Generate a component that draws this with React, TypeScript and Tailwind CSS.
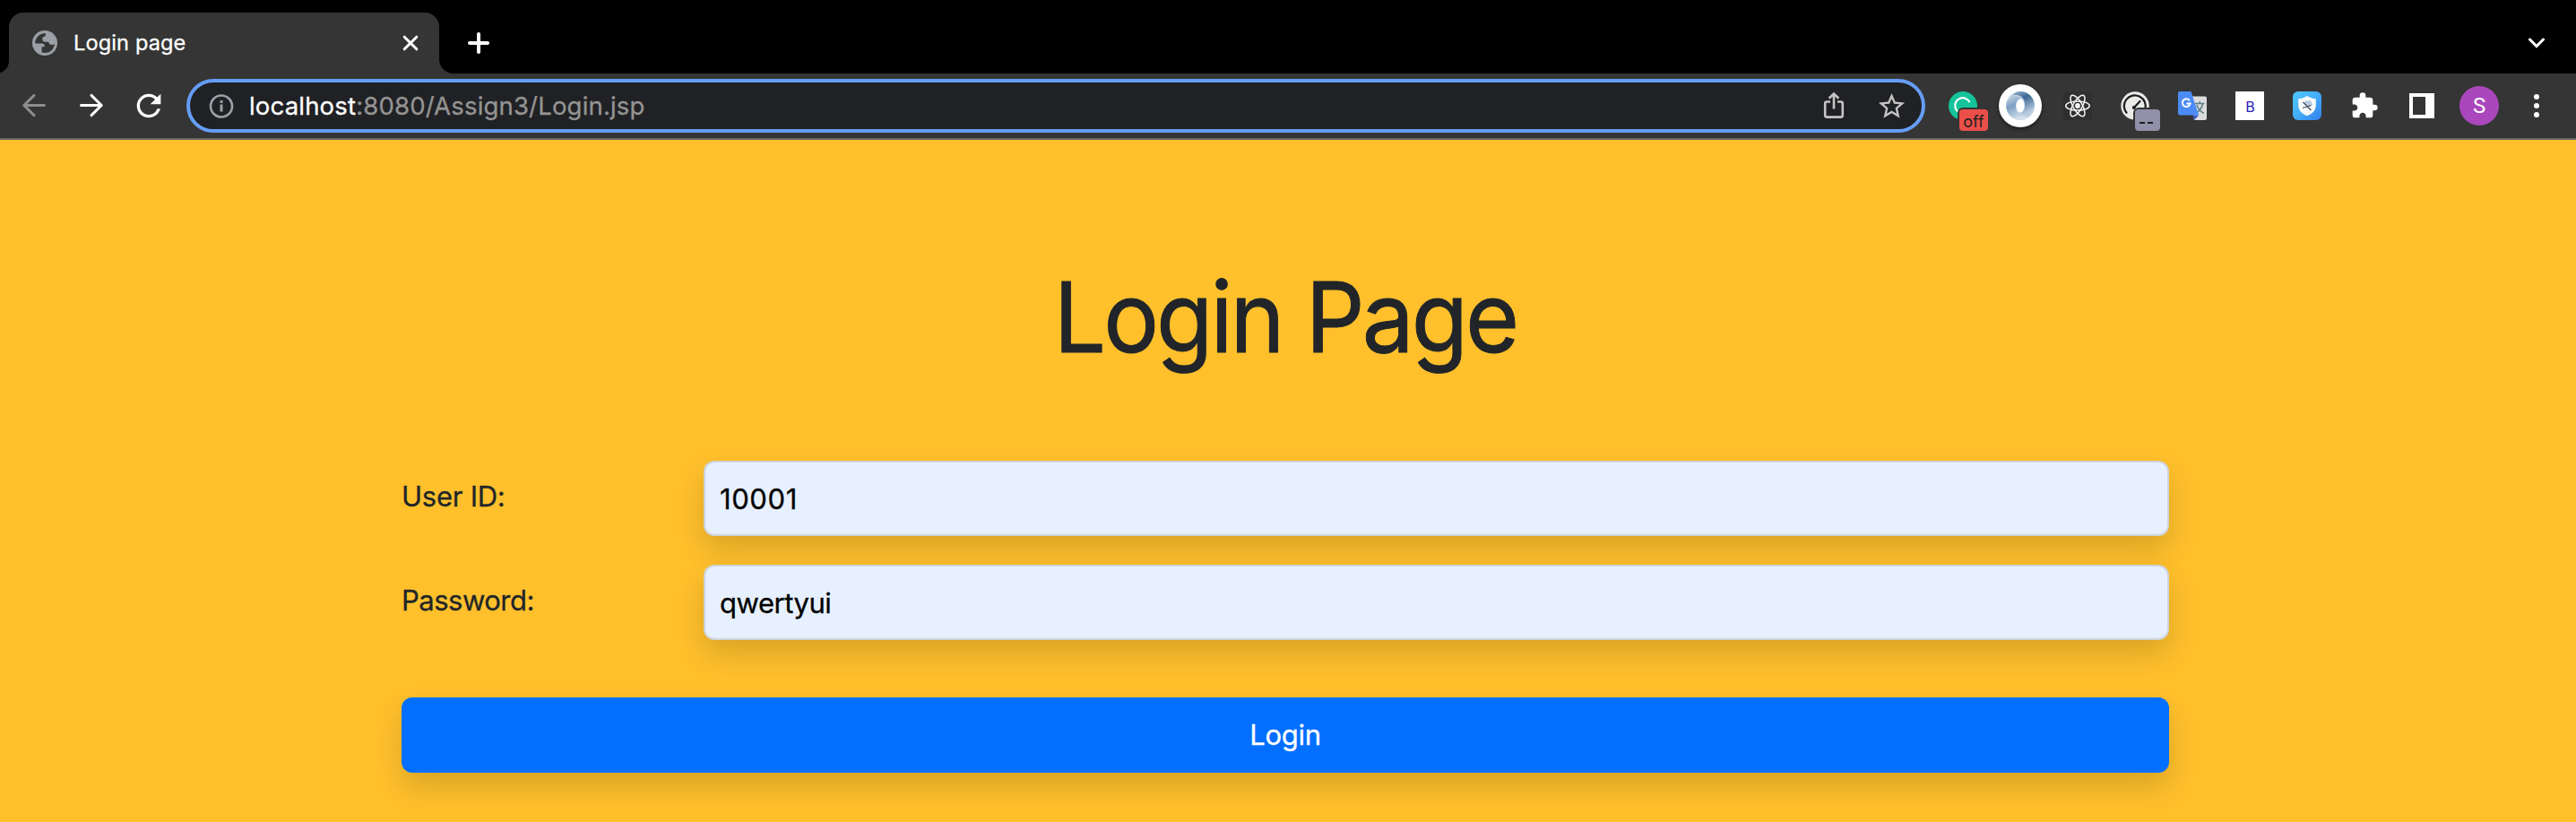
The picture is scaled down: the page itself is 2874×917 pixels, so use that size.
import type { ReactNode } from "react";
import { MdExtension, MdRefresh, MdStarOutline } from "react-icons/md";

const uiFont = "font-['Inter','Liberation_Sans',sans-serif]";

function Cell({ children }: { children: ReactNode }) {
  return <div className="relative flex h-full w-16 shrink-0 items-center justify-center">{children}</div>;
}

function TabStrip() {
  return (
    <div className="flex h-[82px] items-end bg-black">
      <svg width="10" height="14" viewBox="0 0 10 14" className="shrink-0">
        <path d="M10 0C10 7 5 12 0 13.2V14H10Z" fill="#353535" />
      </svg>
      <div className="flex h-[68px] w-[480px] shrink-0 items-center rounded-t-[16px] bg-[#353535] pl-[26px]">
        <svg width="28" height="28" viewBox="0 0 28 28" className="shrink-0">
          <circle cx="14" cy="14" r="14" fill="#9aa0a6" />
          <path
            d="M14.8 3C9 3 4.4 7 3.2 12.6L3.4 14.4H10.6C12.6 14.4 13.8 15.6 13.8 17.4V18.2H10.6V24.6C11.8 25 13 25 14.4 25 20.2 24.8 24.8 20.2 25 14.4 24 16 22 16.4 20 15.6 18.8 14.9 18.8 13.8 18 12.8H14.4C12.6 12.8 11.6 11.8 11.4 10V8.6C11.4 7.4 12.4 6.6 14.8 6.4Z"
            fill="#353535"
          />
        </svg>
        <span className="ml-[18px] w-[339px] text-[23.5px] leading-7 tracking-[0.15px] text-white [-webkit-text-stroke:0.3px]">
          Login page
        </span>
        <svg width="18" height="18" viewBox="0 0 18 18" className="ml-[28px] shrink-0" stroke="#fff" strokeWidth="3" strokeLinecap="round">
          <path d="M2.2 2.2 15.8 15.8M15.8 2.2 2.2 15.8" />
        </svg>
      </div>
      <svg width="16" height="16" viewBox="0 0 16 16" className="shrink-0">
        <path d="M0 0A16 16 0 0 0 16 16H0Z" fill="#353535" />
      </svg>
      <div className="flex h-[68px] flex-1 items-center justify-between pr-[34px] pl-[16px]">
        <svg width="24" height="24" viewBox="0 0 24 24" stroke="#fff" strokeWidth="4" strokeLinecap="round">
          <path d="M12 2V22M2 12H22" />
        </svg>
        <svg width="20" height="12" viewBox="0 0 20 12" fill="none" stroke="#fff" strokeWidth="3" strokeLinecap="round">
          <path d="M2.5 2 10 9.6 17.5 2" />
        </svg>
      </div>
    </div>
  );
}

function Omnibox() {
  return (
    <div className="mx-[10px] flex h-[60px] w-[1940px] shrink-0 items-center rounded-full border-4 border-[#659df5] bg-[#202124] pl-[21px]">
      <svg width="28" height="28" viewBox="0 0 28 28" fill="none" stroke="#9aa0a6">
        <circle cx="14" cy="14.5" r="12" strokeWidth="2.6" />
        <path d="M14 12.5V20.6" strokeWidth="3" />
        <path d="M14 8V11" strokeWidth="3" />
      </svg>
      <span className="ml-[17px] flex-1 text-[27.5px] leading-9 tracking-[0.18px] text-[#949494] [-webkit-text-stroke:0.3px]">
        <span className="text-white">localhost</span>:8080/Assign3/Login.jsp
      </span>
      <svg width="24" height="32" viewBox="0 0 24 32" fill="none" stroke="#c4c4c4" strokeWidth="2.6">
        <path d="M8 11.5H4.2Q2.2 11.5 2.2 13.5V26.5Q2.2 28.6 4.2 28.6H19.8Q21.8 28.6 21.8 26.5V13.5Q21.8 11.5 19.8 11.5H16" />
        <path d="M12 19.5V3.2M6.6 7.8 12 2.6 17.4 7.8" />
      </svg>
      <MdStarOutline className="mr-[16.5px] ml-[34.5px] size-[35px] text-[#c4c4c4]" />
    </div>
  );
}

function Extensions() {
  return (
    <>
      <Cell>
        <svg width="32" height="32" viewBox="0 0 32 32" fill="none">
          <circle cx="16" cy="16" r="16" fill="#15c39a" />
          <path d="M23.2 11.4A8.6 8.6 0 1 0 16 24.4" stroke="#fff" strokeWidth="2.2" strokeLinecap="round" />
        </svg>
        <span className="absolute top-[40px] left-[28px] flex h-6 w-8 items-center justify-center rounded-[4px] bg-[#e94f48] pt-[3px] text-[18px] leading-none text-[#202020] ring-2 ring-[#353535]">
          off
        </span>
      </Cell>
      <Cell>
        <div className="flex size-12 items-center justify-center rounded-full bg-white shadow-[0_2px_4px_rgba(0,0,0,0.5)]">
          <svg width="32" height="32" viewBox="0 0 32 32">
            <defs>
              <linearGradient id="ringLeft" x1="0" y1="0" x2="0.4" y2="1">
                <stop offset="0" stopColor="#c6d6e6" />
                <stop offset="0.45" stopColor="#7c9fc2" />
                <stop offset="1" stopColor="#d3e0ec" />
              </linearGradient>
              <linearGradient id="ringRight" x1="0" y1="0" x2="0.4" y2="1">
                <stop offset="0" stopColor="#9db7d2" />
                <stop offset="0.4" stopColor="#3c6694" />
                <stop offset="1" stopColor="#b4c9dd" />
              </linearGradient>
            </defs>
            <circle cx="16" cy="16" r="16" fill="#bdd0e2" />
            <path d="M16 8C10 2 1 8 0.2 15 0 24 7 32 16 32 20 32 23 30 24 28 16 29 11 25 11 17 11 12 13 9.500 16 8Z" fill="url(#ringLeft)" />
            <path d="M16 24C22 29 31 24 31.800 16 32 7 25 0 16 0 12 0 9 2 8 4 16 3 21 7 21 15 21 20 19 22.500 16 24Z" fill="url(#ringRight)" />
            <ellipse cx="16" cy="16" rx="4.600" ry="7.400" fill="#fff" />
          </svg>
        </div>
      </Cell>
      <Cell>
        <svg width="32" height="32" viewBox="0 0 32 32" fill="none" stroke="#f4f4f4" strokeWidth="1.5">
          <rect width="32" height="32" rx="3" fill="#2f2f2f" stroke="none" />
          <circle cx="16" cy="16" r="2.900" fill="#f4f4f4" stroke="none" />
          <ellipse cx="16" cy="16" rx="13.300" ry="5.100" />
          <ellipse cx="16" cy="16" rx="13.300" ry="5.100" transform="rotate(60 16 16)" />
          <ellipse cx="16" cy="16" rx="13.300" ry="5.100" transform="rotate(120 16 16)" />
        </svg>
      </Cell>
      <Cell>
        <svg width="32" height="32" viewBox="0 0 32 32" fill="none">
          <circle cx="16" cy="16" r="15.700" fill="#e9ebe8" />
          <path d="M7 24.500A12 12 0 1 1 27.200 20" stroke="#1c1c1c" strokeWidth="2.200" />
          <path d="M15 18 21.500 11" stroke="#1c1c1c" strokeWidth="2.200" strokeLinecap="round" />
          <circle cx="14.800" cy="18" r="2" fill="#1c1c1c" />
        </svg>
        <span className="absolute top-[40px] left-[32px] flex h-6 w-7 items-center justify-center gap-[3px] rounded-[4px] bg-[#9090a8] pt-[5px] pr-[3px] ring-2 ring-[#353535]">
          <span className="h-[2px] w-[6px] bg-[#1e1e1e]" />
          <span className="h-[2px] w-[6px] bg-[#1e1e1e]" />
        </span>
      </Cell>
      <Cell>
        <svg width="32" height="32" viewBox="0 0 32 32">
          <path d="M13 5.500H30Q32 5.500 32 7.500V30Q32 32 30 32H18Z" fill="#dcdcdc" />
          <path d="M19 13.500H29.500M24.200 11V13.500M27.500 14C26.500 18.500 23 22.500 19.500 24.500M20.800 15C22.500 19.500 25 22.500 28.800 24.500" stroke="#5d7f8a" strokeWidth="1.600" fill="none" />
          <path d="M16.500 26.500H23.200L18 32Z" fill="#3457c8" />
          <path d="M2 0H14.500L23.200 26.500H2Q0 26.500 0 24.500V2Q0 0 2 0Z" fill="#4c8bf5" />
          <path d="M12.900 10.100A4.400 4.400 0 1 0 13.600 13.600H9.400" stroke="#fff" strokeWidth="2" fill="none" />
        </svg>
      </Cell>
      <Cell>
        <div className="flex size-8 items-center justify-center bg-white pt-px pl-px text-[16px] leading-none text-[#2a22b5]">B</div>
      </Cell>
      <Cell>
        <svg width="32" height="32" viewBox="0 0 32 32">
          <defs>
            <linearGradient id="shieldTile" x1="0" y1="0" x2="1" y2="1">
              <stop offset="0" stopColor="#4fcbff" />
              <stop offset="0.500" stopColor="#44acf8" />
              <stop offset="1" stopColor="#3280ec" />
            </linearGradient>
          </defs>
          <rect width="32" height="32" rx="6" fill="url(#shieldTile)" />
          <path d="M16 5C19 7 22.500 8 25.800 8.200V15C25.800 21 22 25 16 27.200 10 25 6.200 21 6.200 15V8.200C9.500 8 13 7 16 5Z" fill="#f7f9fb" />
          <path d="M13 14C12 11.500 15 9.500 17 10.500 19.500 9.500 21.500 11.500 21 13 22.500 14 21.500 16 20 16H17Z" fill="#b8cbe2" />
          <path d="M11.500 12 20.500 21M11 18.500 14.500 17.500 20.500 15.500" stroke="#3f4d5c" strokeWidth="1.300" fill="none" />
        </svg>
      </Cell>
      <Cell>
        <MdExtension className="size-8 text-white" />
      </Cell>
      <Cell>
        <div className="h-7 w-7 border-4 border-r-[10px] border-white" />
      </Cell>
      <Cell>
        <div className="flex size-11 items-center justify-center rounded-full bg-[#ab47bc] font-['Roboto','Inter',sans-serif] text-[24px] leading-none text-white">
          S
        </div>
      </Cell>
      <Cell>
        <div className="flex flex-col gap-1">
          <span className="size-[6px] rounded-full bg-white" />
          <span className="size-[6px] rounded-full bg-white" />
          <span className="size-[6px] rounded-full bg-white" />
        </div>
      </Cell>
    </>
  );
}

function Toolbar() {
  return (
    <div className="flex h-[74px] items-center border-b-2 border-[#656565] bg-[#353535] pl-[6px]">
      <Cell>
        <svg width="28" height="28" viewBox="0 0 28 28" fill="none" stroke="#8d8d8d" strokeWidth="3" strokeLinecap="round" strokeLinejoin="round">
          <path d="M25.500 13.500H2.800M14 2.400 2.800 13.500 14 24.600" />
        </svg>
      </Cell>
      <Cell>
        <svg width="28" height="28" viewBox="0 0 28 28" fill="none" stroke="#fff" strokeWidth="3" strokeLinecap="round" strokeLinejoin="round">
          <path d="M2.500 13.500H25.200M14 2.400 25.200 13.500 14 24.600" />
        </svg>
      </Cell>
      <Cell>
        <MdRefresh className="size-10 text-white" />
      </Cell>
      <Omnibox />
      <Extensions />
    </div>
  );
}

interface FieldProps {
  id: string;
  label: string;
  value: string;
  labelTracking: string;
  valueTracking: string;
}

function Field({ id, label, value, labelTracking, valueTracking }: FieldProps) {
  return (
    <div className="flex">
      <label
        htmlFor={id}
        className={`flex h-[78px] w-[337px] items-center text-[31px] leading-none text-[#212529] [-webkit-text-stroke:0.3px] ${labelTracking}`}
      >
        {label}
      </label>
      <input
        id={id}
        defaultValue={value}
        className={`h-[84px] flex-1 rounded-[12px] border-2 border-[#ced4da] bg-[#e7f0fe] px-4 text-[31px] text-black shadow-[0_16px_32px_rgba(0,0,0,0.15)] outline-none [-webkit-text-stroke:0.3px] ${valueTracking}`}
      />
    </div>
  );
}

export default function App() {
  return (
    <div className={`flex h-[917px] w-[2874px] flex-col overflow-hidden bg-[#ffc02c] ${uiFont}`}>
      <TabStrip />
      <Toolbar />
      <main className="pr-[454px] pl-[448px]">
        <h1 className="scale-x-[0.945] pt-[142px] text-center text-[109px] leading-[110px] tracking-[-3px] text-[#212529] [-webkit-text-stroke:1px]">
          Login Page
        </h1>
        <form className="mt-[106px] flex flex-col" onSubmit={(e) => e.preventDefault()}>
          <div className="flex flex-col gap-8">
            <Field id="user" label="User ID:" value="10001" labelTracking="tracking-[-0.25px]" valueTracking="tracking-[0.6px]" />
            <Field id="password" label="Password:" value="qwertyui" labelTracking="tracking-[-0.5px]" valueTracking="tracking-[-0.45px]" />
          </div>
          <button className="mt-16 h-[84px] rounded-[12px] bg-[#026fff] text-[31px] tracking-[-0.3px] text-white shadow-[0_16px_32px_rgba(0,0,0,0.15)] [-webkit-text-stroke:0.3px]">
            Login
          </button>
        </form>
      </main>
    </div>
  );
}
